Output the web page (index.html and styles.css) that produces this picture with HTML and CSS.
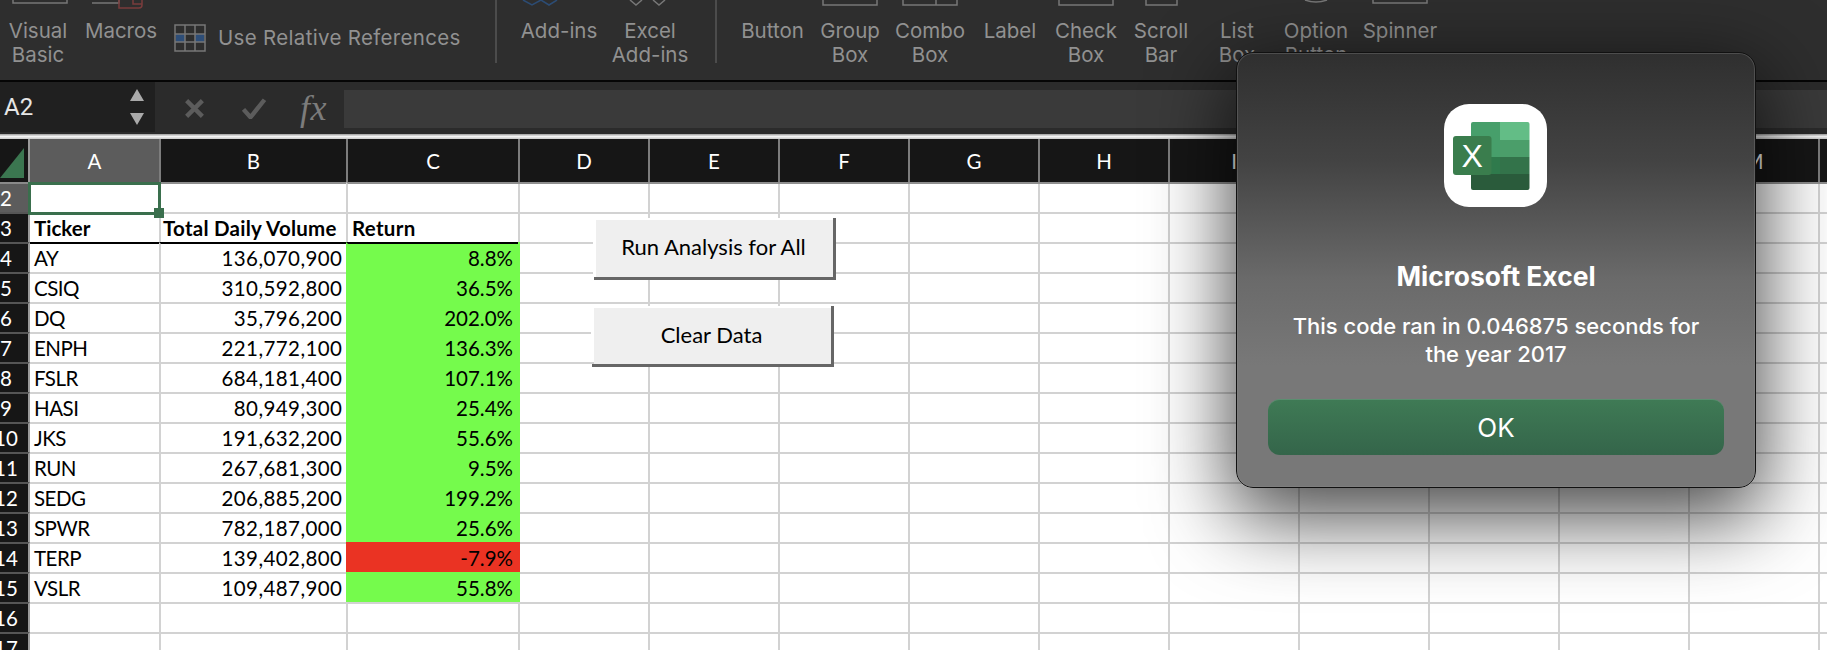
FILE: index.html
```html
<!DOCTYPE html>
<html lang="en">
<head>
<meta charset="utf-8">
<title>Microsoft Excel</title>
<link rel="stylesheet" href="styles.css">
</head>
<body>
<div class="app">
  <header class="ribbon">
    <div class="tool"><div class="slot"><svg viewBox="0 0 60 19"><path d="M5 0v3h54V0" class="ln"/></svg></div><span>Visual<br>Basic</span></div>
    <div class="tool"><div class="slot"><svg viewBox="0 0 60 19"><path d="M1 3h27V0" class="ln"/><path d="M28 0v8h20q3 0 3-3V0M42 0v4h9" class="red"/></svg></div><span>Macros</span></div>
    <div class="relative">
      <svg class="relicon" viewBox="0 0 32 28"><rect x="1" y="1" width="30" height="26" class="ln"/><rect x="2" y="10" width="9" height="8" class="blue"/><rect x="21" y="10" width="9" height="8" class="blue"/><path d="M11 1v26M21 1v26M1 10h30M1 18h30" class="ln"/></svg>
      <span>Use Relative References</span>
    </div>
    <i class="sep"></i>
    <div class="tool"><div class="slot"><svg viewBox="0 0 60 19"><path d="M-6 0l9 5 9-5M12 0l8 5 8-5" class="bluel"/></svg></div><span>Add-ins</span></div>
    <div class="tool"><div class="slot"><svg viewBox="0 0 60 19"><path d="M10 0l6 5 6-5M33 0l6 5 6-5" class="ln"/></svg></div><span>Excel<br>Add-ins</span></div>
    <i class="sep"></i>
    <div class="tool"><span>Button</span></div>
    <div class="tool"><div class="slot"><svg viewBox="0 0 60 19"><path d="M3 0v5h54V0" class="ln"/></svg></div><span>Group<br>Box</span></div>
    <div class="tool"><div class="slot"><svg viewBox="0 0 60 19"><path d="M3 0v5h54V0M36 0v5" class="ln"/></svg></div><span>Combo<br>Box</span></div>
    <div class="tool"><span>Label</span></div>
    <div class="tool"><div class="slot"><svg viewBox="0 0 60 19"><path d="M3 0v5h54V0" class="ln"/></svg></div><span>Check<br>Box</span></div>
    <div class="tool"><div class="slot"><svg viewBox="0 0 60 19"><path d="M15 0v5h31V0" class="ln"/></svg></div><span>Scroll<br>Bar</span></div>
    <div class="tool"><span>List<br>Box</span></div>
    <div class="tool"><div class="slot"><svg viewBox="0 0 60 19"><path d="M19 0q11 4 22 0" class="ln"/></svg></div><span>Option<br>Button</span></div>
    <div class="tool"><div class="slot"><svg viewBox="0 0 60 19"><path d="M3 0v3h54V0" class="ln"/></svg></div><span>Spinner</span></div>
  </header>

  <section class="formula">
    <div class="namebox">
      <span>A2</span>
      <svg class="spin" viewBox="0 0 16 36"><path d="M8 0l7 12H1zM8 36L1 24h14z"/></svg>
    </div>
    <div class="fbtns">
      <svg class="fx-icon" viewBox="0 0 24 24"><path d="M3 3l18 18M21 3L3 21"/></svg>
      <svg class="fx-icon" viewBox="0 0 30 24"><path d="M3 13l8 9L27 2"/></svg>
      <span class="fx">fx</span>
    </div>
    <div class="input"></div>
  </section>
  <div class="rule"></div>

  <main class="sheet">
    <div class="row head">
      <div class="corner"><svg viewBox="0 0 24 30"><path d="M24 0v30H0z"/></svg></div>
      <div class="ch on">A</div><div class="ch">B</div><div class="ch">C</div>
      <div class="rest-head">
        <div class="ch">D</div><div class="ch">E</div><div class="ch">F</div><div class="ch">G</div><div class="ch">H</div><div class="ch">I</div><div class="ch">J</div><div class="ch">K</div><div class="ch">L</div><div class="ch">M</div><div class="ch">N</div>
      </div>
    </div>
    <div class="row"><div class="rh on"><b>2</b></div><div class="c first"><div class="sel"><i></i></div></div><div class="c"></div><div class="c"></div><div class="rest"></div></div>
    <div class="row"><div class="rh"><b>3</b></div><div class="c first th">Ticker</div><div class="c th vol">Total Daily Volume</div><div class="c th ret">Return</div><div class="rest"></div></div>
    <div class="row under"><div class="rh"><b>4</b></div><div class="c first">AY</div><div class="c n v">136,070,900</div><div class="c n up">8.8%</div><div class="rest"></div></div>
    <div class="row"><div class="rh"><b>5</b></div><div class="c first">CSIQ</div><div class="c n v">310,592,800</div><div class="c n up">36.5%</div><div class="rest"></div></div>
    <div class="row"><div class="rh"><b>6</b></div><div class="c first">DQ</div><div class="c n v">35,796,200</div><div class="c n up">202.0%</div><div class="rest"></div></div>
    <div class="row"><div class="rh"><b>7</b></div><div class="c first">ENPH</div><div class="c n v">221,772,100</div><div class="c n up">136.3%</div><div class="rest"></div></div>
    <div class="row"><div class="rh"><b>8</b></div><div class="c first">FSLR</div><div class="c n v">684,181,400</div><div class="c n up">107.1%</div><div class="rest"></div></div>
    <div class="row"><div class="rh"><b>9</b></div><div class="c first">HASI</div><div class="c n v">80,949,300</div><div class="c n up">25.4%</div><div class="rest"></div></div>
    <div class="row"><div class="rh"><b>10</b></div><div class="c first">JKS</div><div class="c n v">191,632,200</div><div class="c n up">55.6%</div><div class="rest"></div></div>
    <div class="row"><div class="rh"><b>11</b></div><div class="c first">RUN</div><div class="c n v">267,681,300</div><div class="c n up">9.5%</div><div class="rest"></div></div>
    <div class="row"><div class="rh"><b>12</b></div><div class="c first">SEDG</div><div class="c n v">206,885,200</div><div class="c n up">199.2%</div><div class="rest"></div></div>
    <div class="row"><div class="rh"><b>13</b></div><div class="c first">SPWR</div><div class="c n v">782,187,000</div><div class="c n up">25.6%</div><div class="rest"></div></div>
    <div class="row"><div class="rh"><b>14</b></div><div class="c first">TERP</div><div class="c n v">139,402,800</div><div class="c n down">-7.9%</div><div class="rest"></div></div>
    <div class="row"><div class="rh"><b>15</b></div><div class="c first">VSLR</div><div class="c n v">109,487,900</div><div class="c n up">55.8%</div><div class="rest"></div></div>
    <div class="row"><div class="rh"><b>16</b></div><div class="c first"></div><div class="c"></div><div class="c"></div><div class="rest"></div></div>
    <div class="row"><div class="rh"><b>17</b></div><div class="c first"></div><div class="c"></div><div class="c"></div><div class="rest"></div></div>

    <button class="macro run">Run Analysis for All</button>
    <button class="macro clear">Clear Data</button>
  </main>

  <aside class="dialog">
    <div class="appicon">
      <svg viewBox="0 0 103 103">
        <path d="M29 18h27v18H27V20a2 2 0 0 1 2-2z" fill="#479f6b"/>
        <path d="M56 18h27.500a2 2 0 0 1 2 2v16H56z" fill="#63bd86"/>
        <rect x="27" y="36" width="29" height="17" fill="#479f6b"/>
        <rect x="56" y="36" width="29.500" height="17" fill="#4b9e6a"/>
        <rect x="27" y="53" width="29" height="17" fill="#2f7a4c"/>
        <rect x="56" y="53" width="29.500" height="17" fill="#33734a"/>
        <path d="M27 70h58.500v14a2 2 0 0 1-2 2H29a2 2 0 0 1-2-2z" fill="#2a5b3b"/>
        <rect x="9" y="32" width="38.500" height="39" rx="3" fill="#3a7d4d"/>
        <text x="28.200" y="62.500" class="x">X</text>
      </svg>
    </div>
    <h1>Microsoft Excel</h1>
    <p>This code ran in 0.046875 seconds for<br>the year 2017</p>
    <button class="ok">OK</button>
  </aside>
</div>
</body>
</html>
```
FILE: styles.css
```css
* { box-sizing: border-box; }
html, body { margin: 0; height: 650px; overflow: hidden; background: #fff; }
.app { position: relative; width: 1827px; height: 650px; overflow: hidden; font-family: Lato, "Open Sans", sans-serif; }

/* ribbon */
.ribbon {
  height: 82px;
  background: #2e2e2e;
  border-bottom: 2px solid #050505;
  display: grid;
  grid-template-columns: 76px 90px 329px 2px 124px 58px 38px 111px 44px 116px 44px 108px 42px 110px 48px 120px;
  color: #919191;
  font: 20.500px/24px Inter, Roboto, sans-serif;
}
.tool { display: flex; flex-direction: column; align-items: center; text-align: center; white-space: nowrap; padding-top: 19px; position: relative; }
.slot { position: absolute; top: 0; left: 50%; margin-left: -30px; width: 60px; height: 19px; }
.slot svg { display: block; width: 60px; height: 19px; overflow: visible; }
.ribbon svg path, .ribbon svg rect { fill: none; stroke-width: 1.500; }
.ln { stroke: #777; }
.red { stroke: #7a3c3c; }
.bluel { stroke: #2c4c74; }
.ribbon svg rect.blue { fill: #2e4e78; stroke: none; }
.relative { display: flex; align-items: center; gap: 12px; height: 76px; padding: 0 0 0 8px; white-space: nowrap; letter-spacing: .32px; }
.relicon { width: 32px; height: 28px; flex: none; }
.sep { display: block; width: 2px; height: 63px; background: #4c4c4c; justify-self: end; }

/* formula bar */
.formula { height: 52px; background: #2b2b2b; display: flex; color: #fff; }
.namebox { width: 155px; height: 50px; background: #202020; display: flex; align-items: center; justify-content: space-between; padding: 0 10px 0 4px; font: 24px Roboto, sans-serif; color: #e6e6e6; }
.spin { width: 16px; height: 36px; fill: #aaa; }
.fbtns { width: 189px; display: flex; align-items: center; padding-left: 29px; height: 52px; }
.fx-icon { width: 21px; height: 21px; fill: none; stroke: #5c5c5c; stroke-width: 5; margin-right: 34px; }
.fx-icon + .fx-icon { width: 30px; margin-right: 31px; }
.fx { font: italic 36px "Liberation Serif", serif; color: #7c7c7c; letter-spacing: .5px; }
.input { flex: 1; height: 38px; margin-top: 8px; background: #3a3a3a; }
.rule { height: 5px; background: linear-gradient(#9c9c9c, #f4f4f4 50%, #c8c8c8); }

/* sheet */
.sheet { position: relative; font-size: 20.500px; color: #000; }
.row { display: grid; grid-template-columns: 30px 129px 187px 172px 1309px; height: 30px; }
.row.head { height: 43px; background: #161616; color: #fff; }
.corner { border-right: 2px solid #9a9a9a; background: #161616; padding-top: 9px; }
.corner svg { display: block; width: 24px; height: 30px; fill: #3b7650; }
.ch { display: flex; align-items: center; justify-content: center; border-left: 2px solid #7d7d7d; }
.corner + .ch { border-left: 0; }
.ch.on { background: #5c5c5c; }
.rest-head { display: flex; }
.rest-head .ch { flex: 0 0 130px; }
.rh { background: #161616; border-right: 2px solid #9a9a9a; border-top: 2px solid #8a8a8a; color: #fff; display: flex; align-items: center; justify-content: center; padding-right: 16px; overflow: hidden; white-space: nowrap; }
.rh b { font-weight: 400; }
.rh.on { background: #5c5c5c; }
.row + .row .rh { border-top-color: #555; }
.row.head + .row .rh { border-top-color: #8a8a8a; }
.c { position: relative; border-top: 2px solid #d2d2d2; border-left: 2px solid #d2d2d2; padding: 0 4px; display: flex; align-items: center; white-space: nowrap; }
.row.head + .row .c, .row.head + .row .rest { border-top-color: #8f8f8f; }
.c.first { border-left: 0; letter-spacing: -.5px; }
.c.first.th { letter-spacing: 0; }
.th { font-weight: 700; }
.vol { padding-left: 2px; letter-spacing: .25px; }
.ret { letter-spacing: .3px; }
.n { justify-content: flex-end; padding-right: 5px; }
.v { padding-right: 3.600px; letter-spacing: .42px; }
.up { background: #75fb4c; border-color: #75fb4c; box-shadow: 2px 0 0 #75fb4c; }
.down { background: #ea3323; border-color: #ea3323; box-shadow: 2px 0 0 #ea3323; }
.rest { border-top: 2px solid #d2d2d2; background: repeating-linear-gradient(to right, #d2d2d2 0 2px, transparent 2px 130px); }
.row.under .c, .row.under .up { border-top-color: #000; }
.row.under .rest { border-top-color: #d2d2d2; }
.sel { position: absolute; left: -2px; right: -2px; top: -2px; bottom: -3px; border: 3px solid #3a6f4d; z-index: 2; }
.sel i { position: absolute; right: -6px; bottom: -6px; width: 10px; height: 10px; background: #3a6f4d; }

.macro { position: absolute; border: 0; background: #efefef; font: 22px Lato, sans-serif; color: #000; box-shadow: -3px -2px 0 #fff; padding: 0 2px 4px 0; }
.macro::before { content: ""; position: absolute; left: -2px; top: -2px; right: -3px; bottom: -3px; border-right: 3px solid #666; border-bottom: 3px solid #666; }
.run { left: 596px; top: 81px; width: 237px; height: 57px; }
.clear { left: 594px; top: 169px; width: 237px; height: 56px; }

/* dialog */
.dialog {
  position: absolute; left: 1236px; top: 52px; width: 520px; height: 436px;
  border: 1px solid #111; border-radius: 17px;
  background: linear-gradient(#2f2f2f 0, #434343 25%, #6a6a6a 52%, #787878 72%, #787878 100%);
  box-shadow: inset 0 0 0 1px #8a8a8a55, 0 25px 80px 5px rgba(0,0,0,.72);
  display: flex; flex-direction: column; align-items: center;
  padding-top: 51px; color: #fff; font-family: Inter, Roboto, sans-serif;
}
.appicon { width: 103px; height: 103px; background: #fff; border-radius: 25px; margin-left: -1px; }
.appicon svg { display: block; width: 103px; height: 103px; }
.x { font: 32px "Liberation Sans", sans-serif; fill: #fff; text-anchor: middle; }
.dialog h1 { margin: 53px 0 0; font-size: 26.400px; line-height: 32px; font-weight: 700; }
.dialog p { margin: 20px 0 0; font-size: 22px; line-height: 28px; text-align: center; font-weight: 500; }
.ok { margin-top: 31px; width: 456px; height: 56px; border: 0; border-top: 1px solid #5a8f70; border-radius: 12px; background: linear-gradient(#3f7a55, #34654a); color: #fff; font: 26px Inter, Roboto, sans-serif; }
```
